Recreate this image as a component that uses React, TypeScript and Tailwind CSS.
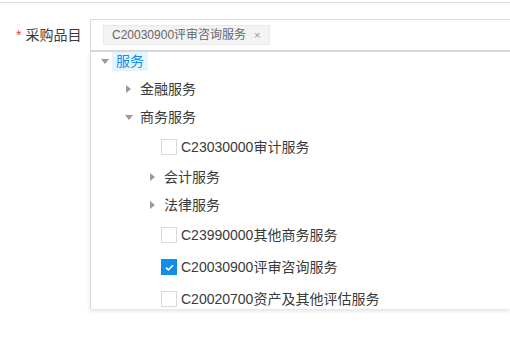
import React from 'react';

type Row = {
  label: string;
  level: number;
  kind: 'open' | 'closed' | 'leaf';
  checked?: boolean;
  active?: boolean;
  mt: string;
};

const ROWS: Row[] = [
  { label: '服务', level: 0, kind: 'open', active: true, mt: 'mt-[-1px]' },
  { label: '金融服务', level: 1, kind: 'closed', mt: 'mt-[8px]' },
  { label: '商务服务', level: 1, kind: 'open', mt: 'mt-[8px]' },
  { label: 'C23030000审计服务', level: 2, kind: 'leaf', mt: 'mt-[10px]' },
  { label: '会计服务', level: 2, kind: 'closed', mt: 'mt-[10px]' },
  { label: '法律服务', level: 2, kind: 'closed', mt: 'mt-[8px]' },
  { label: 'C23990000其他商务服务', level: 2, kind: 'leaf', mt: 'mt-[10px]' },
  { label: 'C20030900评审咨询服务', level: 2, kind: 'leaf', checked: true, mt: 'mt-[12px]' },
  { label: 'C20020700资产及其他评估服务', level: 2, kind: 'leaf', mt: 'mt-[12px]' },
];

const INDENT = ['pl-[6px]', 'pl-[30px]', 'pl-[54px]'];

const Caret = ({ open }: { open: boolean }) => (
  <span className="w-[15px] h-5 flex items-center justify-center shrink-0">
    {open ? (
      <svg width="8" height="5" viewBox="0 0 8 5">
        <path d="M0 0 L8 0 L4 5 Z" fill="#999" />
      </svg>
    ) : (
      <svg width="5" height="8" viewBox="0 0 5 8">
        <path d="M0 0 L5 4 L0 8 Z" fill="#999" />
      </svg>
    )}
  </span>
);

const Checkbox = ({ checked }: { checked?: boolean }) =>
  checked ? (
    <span className="w-4 h-4 bg-[#108ee9] border border-[#108ee9] flex items-center justify-center shrink-0">
      <svg width="9" height="7" viewBox="0 0 9 7">
        <path d="M1 3.6 L3.4 5.8 L8 1.2" stroke="#fff" strokeWidth="1.6" fill="none" />
      </svg>
    </span>
  ) : (
    <span className="w-4 h-4 bg-white border border-[#d9d9d9] shrink-0" />
  );

export default function App() {
  return (
    <div className="w-[510px] h-[339px] overflow-hidden bg-white text-[#3a3a3a] font-['Liberation_Sans','Noto_Sans_CJK_SC',sans-serif]">
      <div className="pt-[2px]">
        <div className="h-px bg-[#dddddd]" />
      </div>

      <div className="flex mt-4">
        {/* Label */}
        <div className="w-[90px] h-8 flex items-center pl-4 text-[14px] shrink-0">
          <span className="text-[#f04134] mr-[4px]">*</span>
          <span>采购品目</span>
        </div>

        <div className="flex-1 min-w-0">
          {/* Input with tag */}
          <div className="h-8 border border-r-0 border-[#d9d9d9] flex items-center pl-[12px]">
            <span className="h-5 flex items-center bg-[#f3f3f3] border border-[#e9e9e9] pl-[8px] pr-[8px] text-[12px] text-[#666]">
              C20030900评审咨询服务
              <span className="ml-[8px] text-[11px] text-[#999] leading-none">×</span>
            </span>
          </div>

          {/* Tree dropdown */}
          <div className="h-[258px] overflow-hidden border-t border-l border-[#d9d9d9] bg-white shadow-[0_2px_4px_rgba(0,0,0,0.12)] text-[14px]">
            {ROWS.map((r) => (
              <div key={r.label} className={`h-5 flex items-center ${r.mt} ${INDENT[r.level]}`}>
                {r.kind === 'leaf' ? (
                  <>
                    <span className="w-[16px] shrink-0" />
                    <Checkbox checked={r.checked} />
                    <span className="ml-1 whitespace-nowrap">{r.label}</span>
                  </>
                ) : (
                  <>
                    <Caret open={r.kind === 'open'} />
                    <span
                      className={`h-5 flex items-center px-1 whitespace-nowrap ${
                        r.active ? 'bg-[#e6f4fd] text-[#108ee9]' : ''
                      }`}
                    >
                      {r.label}
                    </span>
                  </>
                )}
              </div>
            ))}
          </div>
        </div>
      </div>
    </div>
  );
}
